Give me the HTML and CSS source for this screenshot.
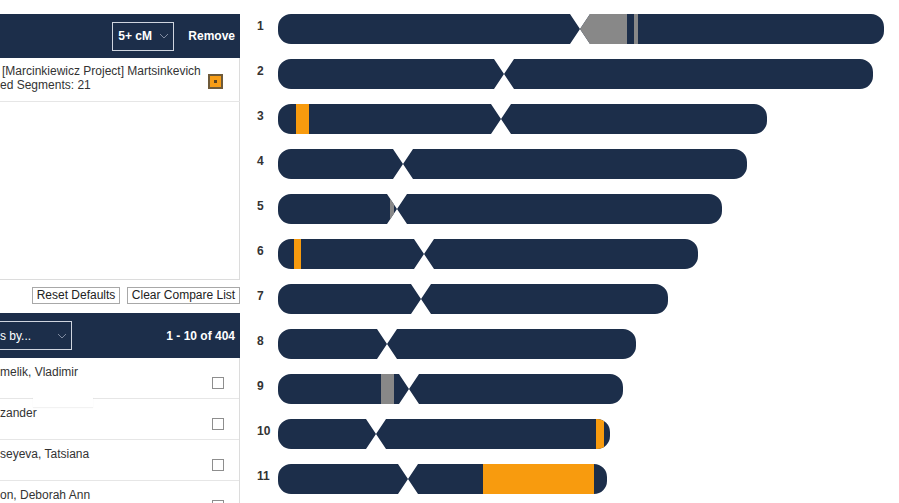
FILE: index.html
```html
<!DOCTYPE html>
<html>
<head>
<meta charset="utf-8">
<link rel="stylesheet" href="styles.css">
</head>
<body>
<div class="page">
  <div class="left">
    <div class="card">
      <div class="hdr">
        <div class="select sel-cm"><span>5+ cM</span>
          <svg class="chev" width="10" height="6" viewBox="0 0 10 6"><polyline points="1,1 5,5 9,1" fill="none" stroke="#7f8aa0" stroke-width="1"/></svg>
        </div>
        <span class="remove">Remove</span>
      </div>
      <div class="item">
        <div class="item-text">[Marcinkiewicz Project] Martsinkevich<br>ed Segments: 21</div>
        <span class="obox"><span class="odot"></span></span>
      </div>
    </div>
    <div class="btns">
      <button class="btn btn-reset">Reset Defaults</button>
      <button class="btn btn-clear">Clear Compare List</button>
    </div>
    <div class="hdr2">
      <div class="select sel-sort"><span>s by...</span>
        <svg class="chev" width="10" height="6" viewBox="0 0 10 6"><polyline points="1,1 5,5 9,1" fill="none" stroke="#7f8aa0" stroke-width="1"/></svg>
      </div>
      <span class="count">1 - 10 of 404</span>
    </div>
    <div class="list">
      <div class="row"><span class="name">melik, Vladimir</span><span class="cb"></span><span class="ghost"></span></div>
      <div class="row"><span class="name">zander</span><span class="cb"></span></div>
      <div class="row"><span class="name">seyeva, Tatsiana</span><span class="cb"></span></div>
      <div class="row"><span class="name">on, Deborah Ann</span><span class="cb"></span></div>
    </div>
  </div>

  <div class="chroms">
    <div class="chr"><span class="lbl">1</span>
      <svg class="bar" width="612" height="30" viewBox="0 0 612 30"><defs><clipPath id="k1"><path d="M13 0 H292 L302 15 L312 0 H593 A13 13 0 0 1 606 13 V17 A13 13 0 0 1 593 30 H312 L302 15 L292 30 H13 A13 13 0 0 1 0 17 V13 A13 13 0 0 1 13 0 Z"/></clipPath></defs>
        <g clip-path="url(#k1)"><rect class="dk" width="612" height="30"/><rect class="gy" x="302" width="47" height="30"/><rect class="gy" x="356" width="4" height="30"/></g></svg>
    </div>
    <div class="chr"><span class="lbl">2</span>
      <svg class="bar" width="612" height="30" viewBox="0 0 612 30"><defs><clipPath id="k2"><path d="M13 0 H216 L226 15 L236 0 H582 A13 13 0 0 1 595 13 V17 A13 13 0 0 1 582 30 H236 L226 15 L216 30 H13 A13 13 0 0 1 0 17 V13 A13 13 0 0 1 13 0 Z"/></clipPath></defs>
        <g clip-path="url(#k2)"><rect class="dk" width="612" height="30"/></g></svg>
    </div>
    <div class="chr"><span class="lbl">3</span>
      <svg class="bar" width="612" height="30" viewBox="0 0 612 30"><defs><clipPath id="k3"><path d="M13 0 H213 L223 15 L233 0 H476 A13 13 0 0 1 489 13 V17 A13 13 0 0 1 476 30 H233 L223 15 L213 30 H13 A13 13 0 0 1 0 17 V13 A13 13 0 0 1 13 0 Z"/></clipPath></defs>
        <g clip-path="url(#k3)"><rect class="dk" width="612" height="30"/><rect class="or" x="18" width="13" height="30"/></g></svg>
    </div>
    <div class="chr"><span class="lbl">4</span>
      <svg class="bar" width="612" height="30" viewBox="0 0 612 30"><defs><clipPath id="k4"><path d="M13 0 H115 L125 15 L135 0 H456 A13 13 0 0 1 469 13 V17 A13 13 0 0 1 456 30 H135 L125 15 L115 30 H13 A13 13 0 0 1 0 17 V13 A13 13 0 0 1 13 0 Z"/></clipPath></defs>
        <g clip-path="url(#k4)"><rect class="dk" width="612" height="30"/></g></svg>
    </div>
    <div class="chr"><span class="lbl">5</span>
      <svg class="bar" width="612" height="30" viewBox="0 0 612 30"><defs><clipPath id="k5"><path d="M13 0 H109 L119 15 L129 0 H431 A13 13 0 0 1 444 13 V17 A13 13 0 0 1 431 30 H129 L119 15 L109 30 H13 A13 13 0 0 1 0 17 V13 A13 13 0 0 1 13 0 Z"/></clipPath></defs>
        <g clip-path="url(#k5)"><rect class="dk" width="612" height="30"/><rect class="gy" x="112" width="4" height="30"/></g></svg>
    </div>
    <div class="chr"><span class="lbl">6</span>
      <svg class="bar" width="612" height="30" viewBox="0 0 612 30"><defs><clipPath id="k6"><path d="M13 0 H136 L146 15 L156 0 H407 A13 13 0 0 1 420 13 V17 A13 13 0 0 1 407 30 H156 L146 15 L136 30 H13 A13 13 0 0 1 0 17 V13 A13 13 0 0 1 13 0 Z"/></clipPath></defs>
        <g clip-path="url(#k6)"><rect class="dk" width="612" height="30"/><rect class="or" x="16" width="7" height="30"/></g></svg>
    </div>
    <div class="chr"><span class="lbl">7</span>
      <svg class="bar" width="612" height="30" viewBox="0 0 612 30"><defs><clipPath id="k7"><path d="M13 0 H133 L143 15 L153 0 H377 A13 13 0 0 1 390 13 V17 A13 13 0 0 1 377 30 H153 L143 15 L133 30 H13 A13 13 0 0 1 0 17 V13 A13 13 0 0 1 13 0 Z"/></clipPath></defs>
        <g clip-path="url(#k7)"><rect class="dk" width="612" height="30"/></g></svg>
    </div>
    <div class="chr"><span class="lbl">8</span>
      <svg class="bar" width="612" height="30" viewBox="0 0 612 30"><defs><clipPath id="k8"><path d="M13 0 H99 L109 15 L119 0 H345 A13 13 0 0 1 358 13 V17 A13 13 0 0 1 345 30 H119 L109 15 L99 30 H13 A13 13 0 0 1 0 17 V13 A13 13 0 0 1 13 0 Z"/></clipPath></defs>
        <g clip-path="url(#k8)"><rect class="dk" width="612" height="30"/></g></svg>
    </div>
    <div class="chr"><span class="lbl">9</span>
      <svg class="bar" width="612" height="30" viewBox="0 0 612 30"><defs><clipPath id="k9"><path d="M13 0 H121 L131 15 L141 0 H332 A13 13 0 0 1 345 13 V17 A13 13 0 0 1 332 30 H141 L131 15 L121 30 H13 A13 13 0 0 1 0 17 V13 A13 13 0 0 1 13 0 Z"/></clipPath></defs>
        <g clip-path="url(#k9)"><rect class="dk" width="612" height="30"/><rect class="gy" x="103" width="13" height="30"/></g></svg>
    </div>
    <div class="chr"><span class="lbl">10</span>
      <svg class="bar" width="612" height="30" viewBox="0 0 612 30"><defs><clipPath id="k10"><path d="M13 0 H88 L98 15 L108 0 H319 A13 13 0 0 1 332 13 V17 A13 13 0 0 1 319 30 H108 L98 15 L88 30 H13 A13 13 0 0 1 0 17 V13 A13 13 0 0 1 13 0 Z"/></clipPath></defs>
        <g clip-path="url(#k10)"><rect class="dk" width="612" height="30"/><rect class="or" x="318" width="8" height="30"/></g></svg>
    </div>
    <div class="chr"><span class="lbl">11</span>
      <svg class="bar" width="612" height="30" viewBox="0 0 612 30"><defs><clipPath id="k11"><path d="M13 0 H120 L130 15 L140 0 H316 A13 13 0 0 1 329 13 V17 A13 13 0 0 1 316 30 H140 L130 15 L120 30 H13 A13 13 0 0 1 0 17 V13 A13 13 0 0 1 13 0 Z"/></clipPath></defs>
        <g clip-path="url(#k11)"><rect class="dk" width="612" height="30"/><rect class="or" x="205" width="111" height="30"/></g></svg>
    </div>
  </div>
</div>
</body>
</html>
```
FILE: styles.css
```css
* { box-sizing: border-box; }
html, body { margin: 0; padding: 0; }
body {
  width: 899px;
  height: 503px;
  overflow: hidden;
  background: #fff;
  font-family: "Liberation Sans", Arial, sans-serif;
  font-size: 12px;
  color: #333;
}
.page { display: flex; align-items: flex-start; }

.left { width: 240px; flex: none; padding-top: 14px; }

.card {
  width: 240px;
  height: 266px;
  border-right: 1px solid #dcdcdc;
  border-bottom: 1px solid #dcdcdc;
}
.hdr {
  width: 240px;
  height: 44px;
  background: #1c2e4a;
  display: flex;
  align-items: center;
  justify-content: flex-end;
  gap: 14px;
  padding-right: 5px;
  color: #fff;
  font-weight: bold;
}
.select {
  display: flex;
  align-items: center;
  justify-content: space-between;
  height: 29px;
  border: 1px solid #cfd5df;
  color: #fff;
}
.sel-cm { width: 62px; padding: 0 4px 0 5px; font-weight: bold; }
.chev { display: block; }

.item {
  display: flex;
  justify-content: space-between;
  align-items: flex-start;
  height: 44px;
  border-bottom: 1px solid #e6e6e6;
  margin-right: -1px;
}
.item-text {
  padding-top: 6px;
  line-height: 14px;
  text-indent: 2px;
  color: #333;
}
.obox {
  width: 15px;
  height: 15px;
  margin-top: 16px;
  margin-right: 17px;
  background: #f79d16;
  border: 2px solid #6e5a3a;
  display: flex;
  align-items: center;
  justify-content: center;
}
.odot { width: 3px; height: 3px; background: #5a4320; }

.btns {
  display: flex;
  justify-content: flex-end;
  gap: 7px;
  margin-top: 7px;
}
.btn {
  height: 17px;
  padding: 0;
  border: 1px solid #a8a8a8;
  background: #fff;
  font-family: "Liberation Sans", Arial, sans-serif;
  font-size: 12px;
  line-height: 15px;
  color: #222;
  text-align: center;
}
.btn-reset { width: 88px; }
.btn-clear { width: 113px; }

.hdr2 {
  margin-top: 9px;
  height: 45px;
  background: #1c2e4a;
  display: flex;
  align-items: center;
  justify-content: space-between;
  padding-right: 5px;
  color: #fff;
}
.sel-sort {
  width: 72px;
  border-left: none;
  padding: 0 4px 0 0;
}
.count { font-weight: bold; }

.list { border-right: 1px solid #dcdcdc; }
.row {
  position: relative;
  display: flex;
  justify-content: space-between;
  align-items: flex-start;
  height: 41px;
  padding-top: 7px;
  border-bottom: 1px solid #e6e6e6;
  line-height: 14px;
}
.cb {
  width: 12px;
  height: 12px;
  margin-top: 12px;
  margin-right: 15px;
  border: 1px solid #8e8e8e;
  background: #fff;
}
.ghost {
  position: absolute;
  left: 33px;
  top: 38px;
  width: 60px;
  height: 11px;
  background: #fff;
  box-shadow: 0 1px 1px rgba(0, 0, 0, 0.05);
}

.chroms {
  flex: 1;
  padding-top: 14px;
  padding-left: 17px;
  display: flex;
  flex-direction: column;
  gap: 15px;
}
.chr { display: flex; align-items: flex-start; height: 30px; }
.lbl {
  width: 21px;
  flex: none;
  padding-top: 5px;
  line-height: 14px;
  font-weight: bold;
  color: #333;
}
.bar { display: block; flex: none; }
.dk { fill: #1c2e4a; }
.gy { fill: #888888; }
.or { fill: #f89b0e; }
```
